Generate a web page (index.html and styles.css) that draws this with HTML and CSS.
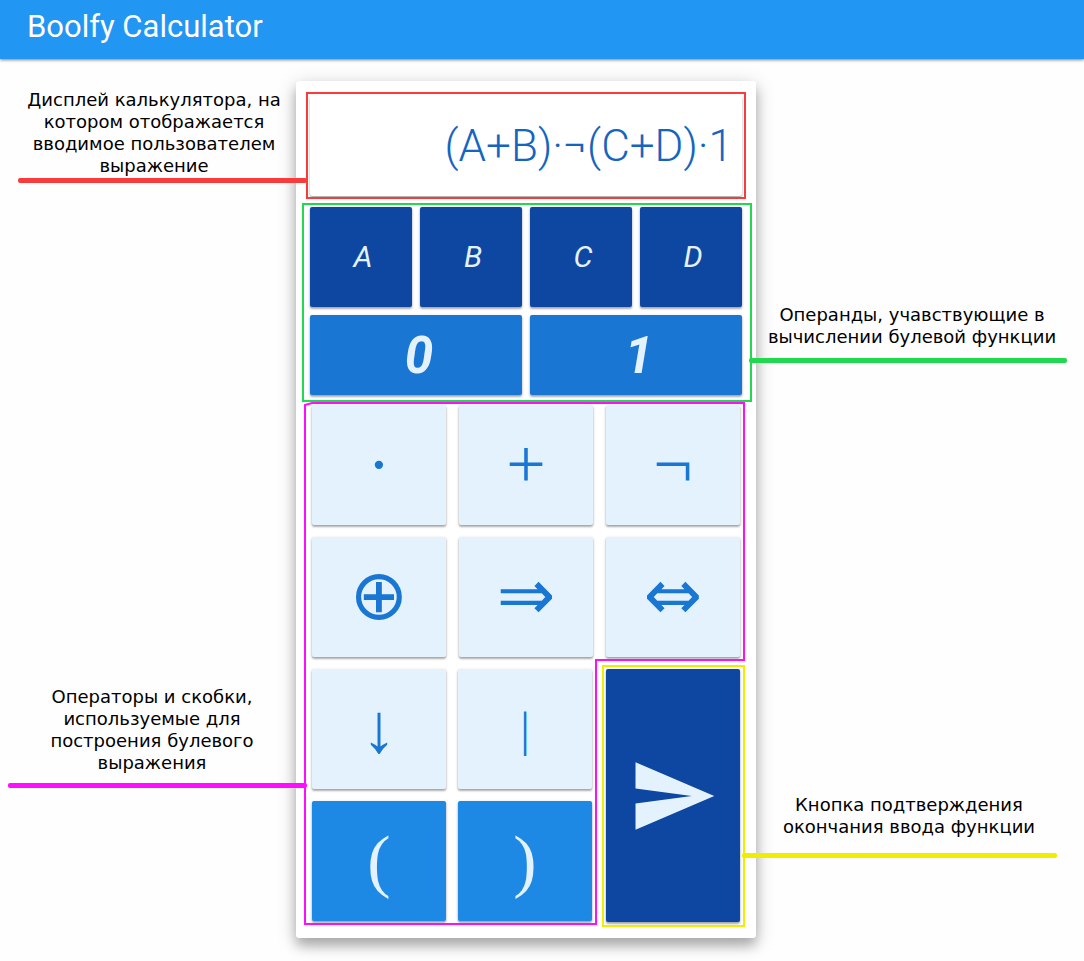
FILE: index.html
```html
<!DOCTYPE html>
<html lang="ru">
<head>
<meta charset="utf-8">
<meta name="viewport" content="width=device-width, initial-scale=1">
<title>Boolfy Calculator</title>
<link rel="stylesheet" href="styles.css">
</head>
<body>
<header class="appbar"><h1 class="appbar-title">Boolfy Calculator</h1></header>
<main class="layout">
  <aside class="side side-left">
    <section class="note note-display">
      <p>Дисплей калькулятора, на<br>котором отображается<br>вводимое пользователем<br>выражение</p>
      <div class="pointer"></div>
    </section>
    <section class="note note-operators">
      <p>Операторы и скобки,<br>используемые для<br>построения булевого<br>выражения</p>
      <div class="pointer"></div>
    </section>
  </aside>

  <div class="card">
    <output class="display">(A+B)·¬(C+D)·1</output>
    <div class="operands">
      <button class="key variable" type="button">A</button>
      <button class="key variable" type="button">B</button>
      <button class="key variable" type="button">C</button>
      <button class="key variable" type="button">D</button>
      <button class="key constant" type="button">0</button>
      <button class="key constant" type="button">1</button>
    </div>
    <div class="operators">
      <button class="key operator" type="button">·</button>
      <button class="key operator" type="button">+</button>
      <button class="key operator" type="button">¬</button>
      <button class="key operator symbol" type="button">⊕</button>
      <button class="key operator symbol" type="button">⇒</button>
      <button class="key operator symbol" type="button">⇔</button>
    </div>
    <div class="bottom">
      <div class="brackets">
        <button class="key operator" type="button">↓</button>
        <button class="key operator bar" type="button">|</button>
        <button class="key bracket" type="button">(</button>
        <button class="key bracket" type="button">)</button>
      </div>
      <button class="key send" type="button" aria-label="Вычислить">
        <svg class="send-icon" viewBox="0 0 24 24" aria-hidden="true"><path d="M2.01 21 23 12 2.01 3 2 10l15 2-15 2z"/></svg>
      </button>
    </div>
    <svg class="frames" viewBox="0 0 460 857" preserveAspectRatio="none" aria-hidden="true">
      <path class="frame-red" d="M11 12H449V117H11Z"/>
      <path class="frame-green" d="M7 123H455V320H7Z"/>
      <path class="frame-magenta" d="M9 324 16 322H448V579H300V843H9Z"/>
      <path class="frame-yellow" d="M307 585H448V845H307Z"/>
    </svg>
  </div>

  <aside class="side side-right">
    <section class="note note-operands">
      <p>Операнды, учавствующие в<br>вычислении булевой функции</p>
      <div class="pointer"></div>
    </section>
    <section class="note note-send">
      <p>Кнопка подтверждения<br>окончания ввода функции</p>
      <div class="pointer"></div>
    </section>
  </aside>
</main>
</body>
</html>
```
FILE: styles.css
```css
* { box-sizing: border-box; }

body {
  margin: 0;
  background: #fefefe;
  color: #000;
  font-family: Roboto, "Liberation Sans", sans-serif;
}

.appbar {
  display: flex;
  align-items: center;
  padding: 9px 27px 14px;
  background: #2196f3;
  box-shadow: 0 1px 3px rgba(0, 0, 0, .5);
}

.appbar-title {
  margin: 0;
  color: #fff;
  font-size: 31px;
  font-weight: 400;
  line-height: 36px;
}

.layout {
  display: grid;
  grid-template-columns: minmax(0, 296fr) minmax(0, 460px) minmax(0, 328fr);
  padding: 22px 0 23px;
}

.card {
  position: relative;
  display: flex;
  flex-direction: column;
  padding: 15px 14px 16px;
  border-radius: 3px;
  background: #fff;
  box-shadow: 0 8px 12px rgba(0, 0, 0, .24), 0 4px 20px rgba(0, 0, 0, .19);
}

.display {
  height: 100px;
  padding: 0 9px;
  border-radius: 2px;
  color: #1565c0;
  font-size: 44px;
  font-weight: 300;
  line-height: 100px;
  text-align: right;
  white-space: nowrap;
  box-shadow: 0 1px 2px rgba(0, 0, 0, .4);
}

.operands {
  display: grid;
  grid-template-columns: repeat(4, 1fr);
  gap: 8px;
  margin: 11px 0 10px;
}

.operators {
  display: grid;
  grid-template-columns: repeat(3, 1fr);
  gap: 12px 13px;
  padding: 0 2px;
}

.bottom {
  display: grid;
  grid-template-columns: 280fr 134fr;
  gap: 14px;
  margin-top: 12px;
  padding: 0 2px;
}

.brackets {
  display: grid;
  grid-template-columns: 1fr 1fr;
  gap: 12px;
  padding-bottom: 1px;
}

.key {
  display: flex;
  align-items: center;
  justify-content: center;
  min-width: 0;
  padding: 0;
  border: 0;
  border-radius: 2px;
  color: #e3f2fd;
  font-family: inherit;
  cursor: pointer;
  box-shadow: 0 2px 2px rgba(0, 0, 0, .22), 0 1px 3px rgba(0, 0, 0, .24);
}

.variable {
  height: 100px;
  padding: 0 0 2px 4px;
  background: #0d47a1;
  font-size: 30px;
  font-style: italic;
}

.constant {
  grid-column: span 2;
  height: 80px;
  padding-left: 6px;
  background: #1976d2;
  font-size: 51px;
  font-style: italic;
  font-weight: 700;
}

.operator {
  height: 120px;
  background: #e3f2fd;
  color: #1976d2;
  font-family: "Liberation Serif", serif;
  font-size: 70px;
}

.symbol {
  padding-bottom: 4px;
  font-family: "DejaVu Sans", sans-serif;
}

.bar { font-size: 48px; }

.bracket {
  height: 120px;
  background: #1e88e5;
  font-family: "Liberation Serif", serif;
  font-size: 70px;
}

.send { background: #0d47a1; }

.send-icon {
  width: 90px;
  height: 90px;
  fill: currentColor;
}

.frames {
  position: absolute;
  inset: 0;
  width: 100%;
  height: 100%;
  pointer-events: none;
}

.frames path {
  fill: none;
  stroke-width: 2;
  vector-effect: non-scaling-stroke;
}

.frame-red { stroke: #f93b3b; }
.frame-green { stroke: #21d94f; }
.frame-magenta { stroke: #ff0dff; }
.frame-yellow { stroke: #f0ee00; }

.side {
  position: relative;
  z-index: 1;
  display: flex;
  flex-direction: column;
}

.side-left { padding-top: 8px; }
.side-right { padding-top: 223px; }

.note p {
  margin: 0;
  font-family: "DejaVu Sans", sans-serif;
  font-size: 18px;
  line-height: 22px;
  text-align: center;
  white-space: nowrap;
}

.pointer {
  height: 5px;
  border-radius: 2px;
}

.side-left .pointer { margin-right: -11px; }

.note-display p { padding-left: 12px; }
.note-display .pointer { margin-top: 1px; margin-left: 18px; background: #f93b3b; }

.note-operators { margin-top: 503px; }
.note-operators p { padding-left: 8px; }
.note-operators .pointer { margin-top: 9px; margin-left: 8px; background: #ff0dff; }

.note-operands p { padding-right: 16px; }
.note-operands .pointer { margin: 10px 17px 0 -7px; background: #21d94f; }

.note-send { margin-top: 431px; }
.note-send p { padding-right: 22px; }
.note-send .pointer { margin: 15px 27px 0 -14px; background: #f0ee00; }
```
